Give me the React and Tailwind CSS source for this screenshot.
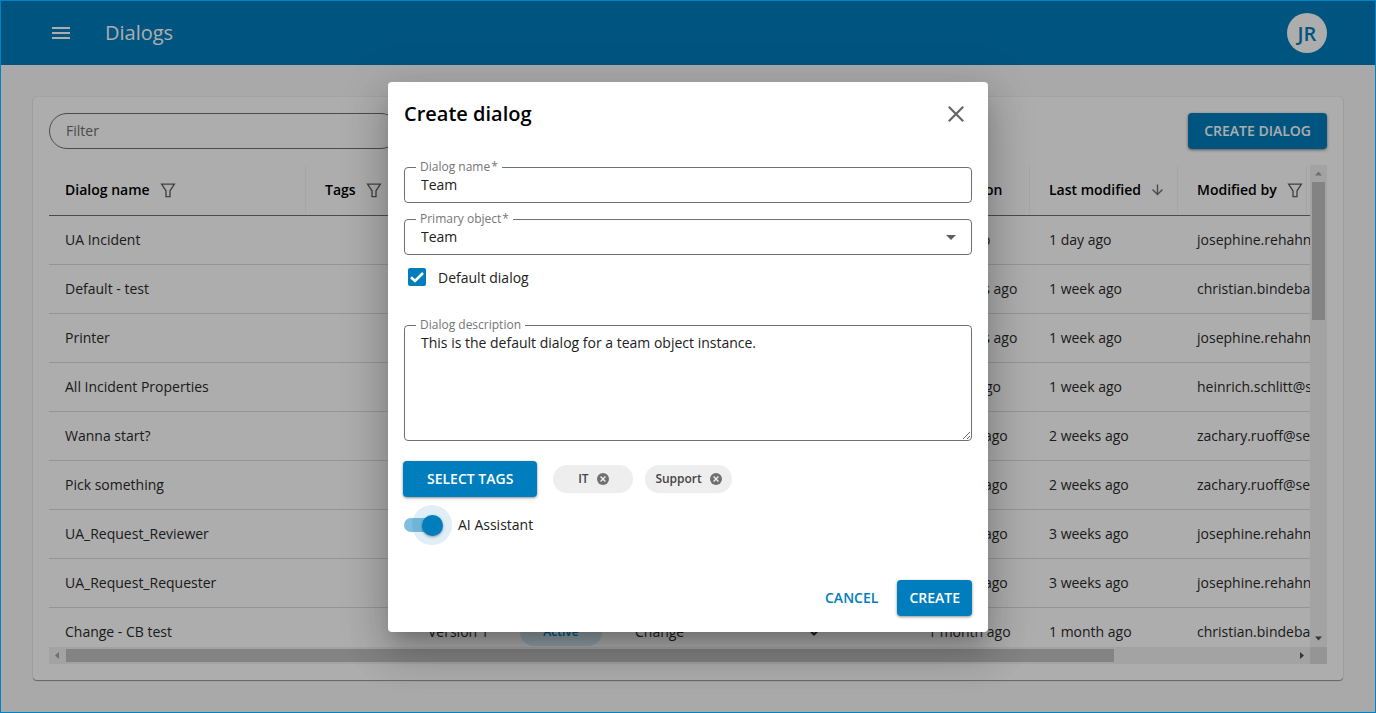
const rows = [
  { name: "UA Incident", object: "Incident", created: "1 day ago", modified: "1 day ago", by: "josephine.rehahn@s" },
  { name: "Default - test", object: "Incident", created: "2 months ago", modified: "1 week ago", by: "christian.bindebals" },
  { name: "Printer", object: "Printer", created: "2 months ago", modified: "1 week ago", by: "josephine.rehahn@s" },
  { name: "All Incident Properties", object: "Incident", created: "1 week ago", modified: "1 week ago", by: "heinrich.schlitt@serv" },
  { name: "Wanna start?", object: "Request", created: "2 weeks ago", modified: "2 weeks ago", by: "zachary.ruoff@serv" },
  { name: "Pick something", object: "Request", created: "2 weeks ago", modified: "2 weeks ago", by: "zachary.ruoff@serv" },
  { name: "UA_Request_Reviewer", object: "Request", created: "3 weeks ago", modified: "3 weeks ago", by: "josephine.rehahn@s" },
  { name: "UA_Request_Requester", object: "Request", created: "3 weeks ago", modified: "3 weeks ago", by: "josephine.rehahn@s" },
  { name: "Change - CB test", object: "Change", created: "1 month ago", modified: "1 month ago", by: "christian.bindebals" },
];

const tags = ["IT", "Support"];

function FilterIcon() {
  return (
    <svg className="size-4 shrink-0 text-[#5f5f5f]" viewBox="0 0 16 16" fill="none" stroke="currentColor" strokeWidth="1.3">
      <path d="M1.600 2.200h12.800L10 8.800v5.800H6V8.800z" />
    </svg>
  );
}

function ArrowDownIcon() {
  return (
    <svg className="size-4 shrink-0 text-[#6f6f6f]" viewBox="0 0 16 16" fill="none" stroke="currentColor" strokeWidth="1.4">
      <path d="M6.500 2.500v10M1.500 7.500l5 5 5-5" />
    </svg>
  );
}

function HeaderCell({ children, icon }) {
  return (
    <th className="h-[51px] border-b border-[#6f6f6f] p-0 pr-[3px] text-left font-semibold text-black">
      <div className="flex h-12 items-center gap-2.5 border-r border-[#f3f3f3] pl-4 whitespace-nowrap">
        {children}
        {icon}
      </div>
    </th>
  );
}

function Cell({ children }) {
  return (
    <td className="h-[49px] overflow-hidden border-b border-[#dcdcdc] p-0 pl-4 whitespace-nowrap">
      {children}
    </td>
  );
}

function DialogTable() {
  return (
    <table className="w-[1476px] table-fixed border-separate border-spacing-0 text-sm text-[#2a2a2a]">
      <colgroup>
        <col className="w-[260px]" />
        <col className="w-[103px]" />
        <col className="w-[92px]" />
        <col className="w-[115px]" />
        <col className="w-[293px]" />
        <col className="w-[121px]" />
        <col className="w-[148px]" />
        <col className="w-[129px]" />
        <col />
      </colgroup>
      <thead>
        <tr>
          <HeaderCell icon={<FilterIcon />}>Dialog name</HeaderCell>
          <HeaderCell icon={<FilterIcon />}>Tags</HeaderCell>
          <HeaderCell>Version</HeaderCell>
          <HeaderCell>Status</HeaderCell>
          <HeaderCell>Primary object</HeaderCell>
          <HeaderCell>Created on</HeaderCell>
          <HeaderCell icon={<ArrowDownIcon />}>Last modified</HeaderCell>
          <HeaderCell icon={<FilterIcon />}>Modified by</HeaderCell>
          <HeaderCell />
        </tr>
      </thead>
      <tbody>
        {rows.map((row) => (
          <tr key={row.name}>
            <Cell>{row.name}</Cell>
            <Cell />
            <Cell>Version 1</Cell>
            <Cell>
              <span className="flex h-7 w-[82px] items-center justify-center rounded-full bg-[#d6ecf8] text-xs font-semibold text-[#007dbd]">
                Active
              </span>
            </Cell>
            <Cell>
              <div className="flex items-center justify-between pr-[92px]">
                {row.object}
                <svg className="size-3" viewBox="0 0 12 12" fill="none" stroke="currentColor" strokeWidth="2">
                  <path d="M1.500 4L6 8.500 10.500 4" />
                </svg>
              </div>
            </Cell>
            <Cell>{row.created}</Cell>
            <Cell>{row.modified}</Cell>
            <Cell>{row.by}</Cell>
            <Cell />
          </tr>
        ))}
      </tbody>
    </table>
  );
}

function ScrollArrow({ path, className }) {
  return (
    <div className="flex size-[17px] shrink-0 items-center justify-center">
      <svg className={className} width="7" height="7" viewBox="0 0 7 7" fill="currentColor">
        <path d={path} />
      </svg>
    </div>
  );
}

function TopBar() {
  return (
    <header className="flex h-16 shrink-0 items-center bg-[#007dbd] pr-12 pl-[51px] text-white">
      <button type="button" aria-label="Menu" className="flex h-3 w-[18px] flex-col justify-between">
        <span className="h-0.5 w-full bg-white" />
        <span className="h-0.5 w-full bg-white" />
        <span className="h-0.5 w-full bg-white" />
      </button>
      <h1 className="ml-[35px] text-xl">Dialogs</h1>
      <div className="ml-auto flex size-10 items-center justify-center rounded-full bg-white pt-0.5 text-xl font-semibold text-[#007dbd]">
        JR
      </div>
    </header>
  );
}

function DialogList() {
  return (
    <section className="flex min-h-0 flex-1 flex-col gap-4 rounded bg-white p-4 shadow-[0_1px_1px_rgba(0,0,0,0.4),0_0_2px_rgba(0,0,0,0.12)]">
      <div className="flex items-center justify-between">
        <input
          type="text"
          aria-label="Filter"
          placeholder="Filter"
          className="h-9 w-[350px] rounded-full border border-[#6f6f6f] px-4 pb-0.5 text-sm placeholder:text-[#6f6f6f]"
        />
        <button type="button" className="h-9 rounded bg-[#007dbd] px-4 text-sm font-semibold text-white shadow-[0_1px_3px_rgba(0,0,0,0.5)]">
          CREATE DIALOG
        </button>
      </div>
      <div className="grid min-h-0 flex-1 grid-cols-[minmax(0,1fr)_17px] grid-rows-[minmax(0,1fr)_17px]">
        <div className="overflow-hidden">
          <DialogTable />
        </div>
        <div className="flex flex-col items-center bg-[#f1f1f1]">
          <ScrollArrow className="text-[#a3a3a3]" path="M0 5.500L3.500 1.500 7 5.500z" />
          <div className="h-[138px] w-[13px] bg-[#c1c1c1]" />
          <div className="flex-1" />
          <ScrollArrow className="text-[#505050]" path="M0 1.500l3.500 4L7 1.500z" />
        </div>
        <div className="flex items-center bg-[#f1f1f1]">
          <ScrollArrow className="text-[#a3a3a3]" path="M5 0L1 3.500 5 7z" />
          <div className="min-w-0 flex-1">
            <div className="h-[13px] w-[85.4%] bg-[#c1c1c1]" />
          </div>
          <ScrollArrow className="text-[#505050]" path="M2 0l4 3.500L2 7z" />
        </div>
        <div className="bg-[#dcdcdc]" />
      </div>
    </section>
  );
}

function Field({ id, label, required, children }) {
  return (
    <div className="relative">
      {children}
      <label htmlFor={id} className="absolute -top-2 left-3 bg-white px-1 text-xs leading-4 text-[#757575]">
        {label}
        {required && <span className="ml-px">*</span>}
      </label>
    </div>
  );
}

function CreateDialog() {
  return (
    <form
      role="dialog"
      aria-labelledby="create-title"
      className="w-[600px] rounded bg-white p-4 text-sm text-[#212121] shadow-[0_11px_15px_-7px_rgba(0,0,0,0.2),0_24px_38px_3px_rgba(0,0,0,0.14),0_9px_46px_8px_rgba(0,0,0,0.12)]"
    >
      <div className="flex h-8 items-center justify-between">
        <h2 id="create-title" className="text-xl font-semibold text-black">Create dialog</h2>
        <button type="button" aria-label="Close" className="flex size-8 items-center justify-center text-[#666666]">
          <svg className="size-4" viewBox="0 0 16 16" fill="none" stroke="currentColor" strokeWidth="2.2">
            <path d="M0.800 0.800l14.400 14.400M15.200 0.800L0.800 15.200" />
          </svg>
        </button>
      </div>

      <div className="mt-[37px] flex flex-col gap-4">
        <Field id="name" label="Dialog name" required>
          <input id="name" type="text" defaultValue="Team" className="block h-9 w-full rounded border border-[#6f6f6f] px-4 pb-0.5" />
        </Field>
        <Field id="object" label="Primary object" required>
          <select id="object" defaultValue="Team" className="block h-9 w-full appearance-none rounded border border-[#6f6f6f] px-4">
            <option>Team</option>
          </select>
          <svg className="pointer-events-none absolute top-4 right-4 h-[5px] w-2.5 text-[#5f5f5f]" viewBox="0 0 10 5" fill="currentColor">
            <path d="M0 0h10L5 5z" />
          </svg>
        </Field>
      </div>

      <div className="mt-3 flex h-5 items-center gap-3 pl-1">
        <span className="relative flex size-[18px]">
          <input id="default" type="checkbox" defaultChecked className="size-[18px] appearance-none rounded-xs bg-[#007dbd]" />
          <svg className="pointer-events-none absolute inset-0 size-[18px]" viewBox="0 0 18 18" fill="none" stroke="#fff" strokeWidth="2.6">
            <path d="M3 9.200l4 3.800 8-8" />
          </svg>
        </span>
        <label htmlFor="default" className="pt-0.5">Default dialog</label>
      </div>

      <div className="mt-[38px]">
        <Field id="description" label="Dialog description">
          <textarea
            id="description"
            defaultValue="This is the default dialog for a team object instance."
            className="block h-[116px] w-full resize-y rounded border border-[#6f6f6f] px-4 py-[7px] leading-5"
          />
        </Field>
      </div>

      <div className="mt-5 flex items-center gap-3">
        <button type="button" className="mr-1 -ml-px h-9 rounded bg-[#007dbd] px-6 font-semibold text-white shadow-[0_1px_3px_rgba(0,0,0,0.45)]">
          SELECT TAGS
        </button>
        {tags.map((tag) => (
          <span key={tag} className="flex h-7 min-w-20 items-center justify-center gap-2 rounded-full bg-[#eeeeee] px-2.5 text-xs font-semibold text-[#444444]">
            {tag}
            <button type="button" aria-label={"Remove " + tag}>
              <svg className="size-3" viewBox="0 0 12 12" fill="none">
                <circle cx="6" cy="6" r="6" fill="#707070" />
                <path d="M3.600 3.600l4.800 4.800M8.400 3.600L3.600 8.400" stroke="#eee" strokeWidth="1.400" />
              </svg>
            </button>
          </span>
        ))}
      </div>

      <div className="mt-2 flex h-10 items-center">
        <span className="relative flex h-3.5 w-10 items-center">
          <input id="assistant" type="checkbox" role="switch" defaultChecked className="h-3.5 w-9 appearance-none rounded-full bg-[#007dbd]/50" />
          <span className="pointer-events-none absolute left-2 flex size-10 items-center justify-center rounded-full bg-[#007dbd]/12">
            <span className="size-[21px] rounded-full bg-[#007dbd] shadow-[0_1px_3px_rgba(0,0,0,0.4)]" />
          </span>
        </span>
        <label htmlFor="assistant" className="ml-3.5">AI Assistant</label>
      </div>

      <div className="mt-[35px] flex justify-end gap-[7px]">
        <button type="button" className="h-9 px-3 font-semibold text-[#007dbd]">CANCEL</button>
        <button type="submit" className="h-9 rounded bg-[#007dbd] px-3 font-semibold text-white shadow-[0_1px_3px_rgba(0,0,0,0.45)]">
          CREATE
        </button>
      </div>
    </form>
  );
}

function App() {
  return (
    <div className="relative flex h-screen flex-col overflow-hidden border border-[#0083c4] bg-[#fafafa] font-['Open_Sans',sans-serif]">
      <TopBar />
      <main className="flex min-h-0 flex-1 flex-col p-8">
        <DialogList />
      </main>
      <div className="absolute inset-0 flex items-center justify-center bg-black/32 pt-px">
        <CreateDialog />
      </div>
    </div>
  );
}

export default App;
